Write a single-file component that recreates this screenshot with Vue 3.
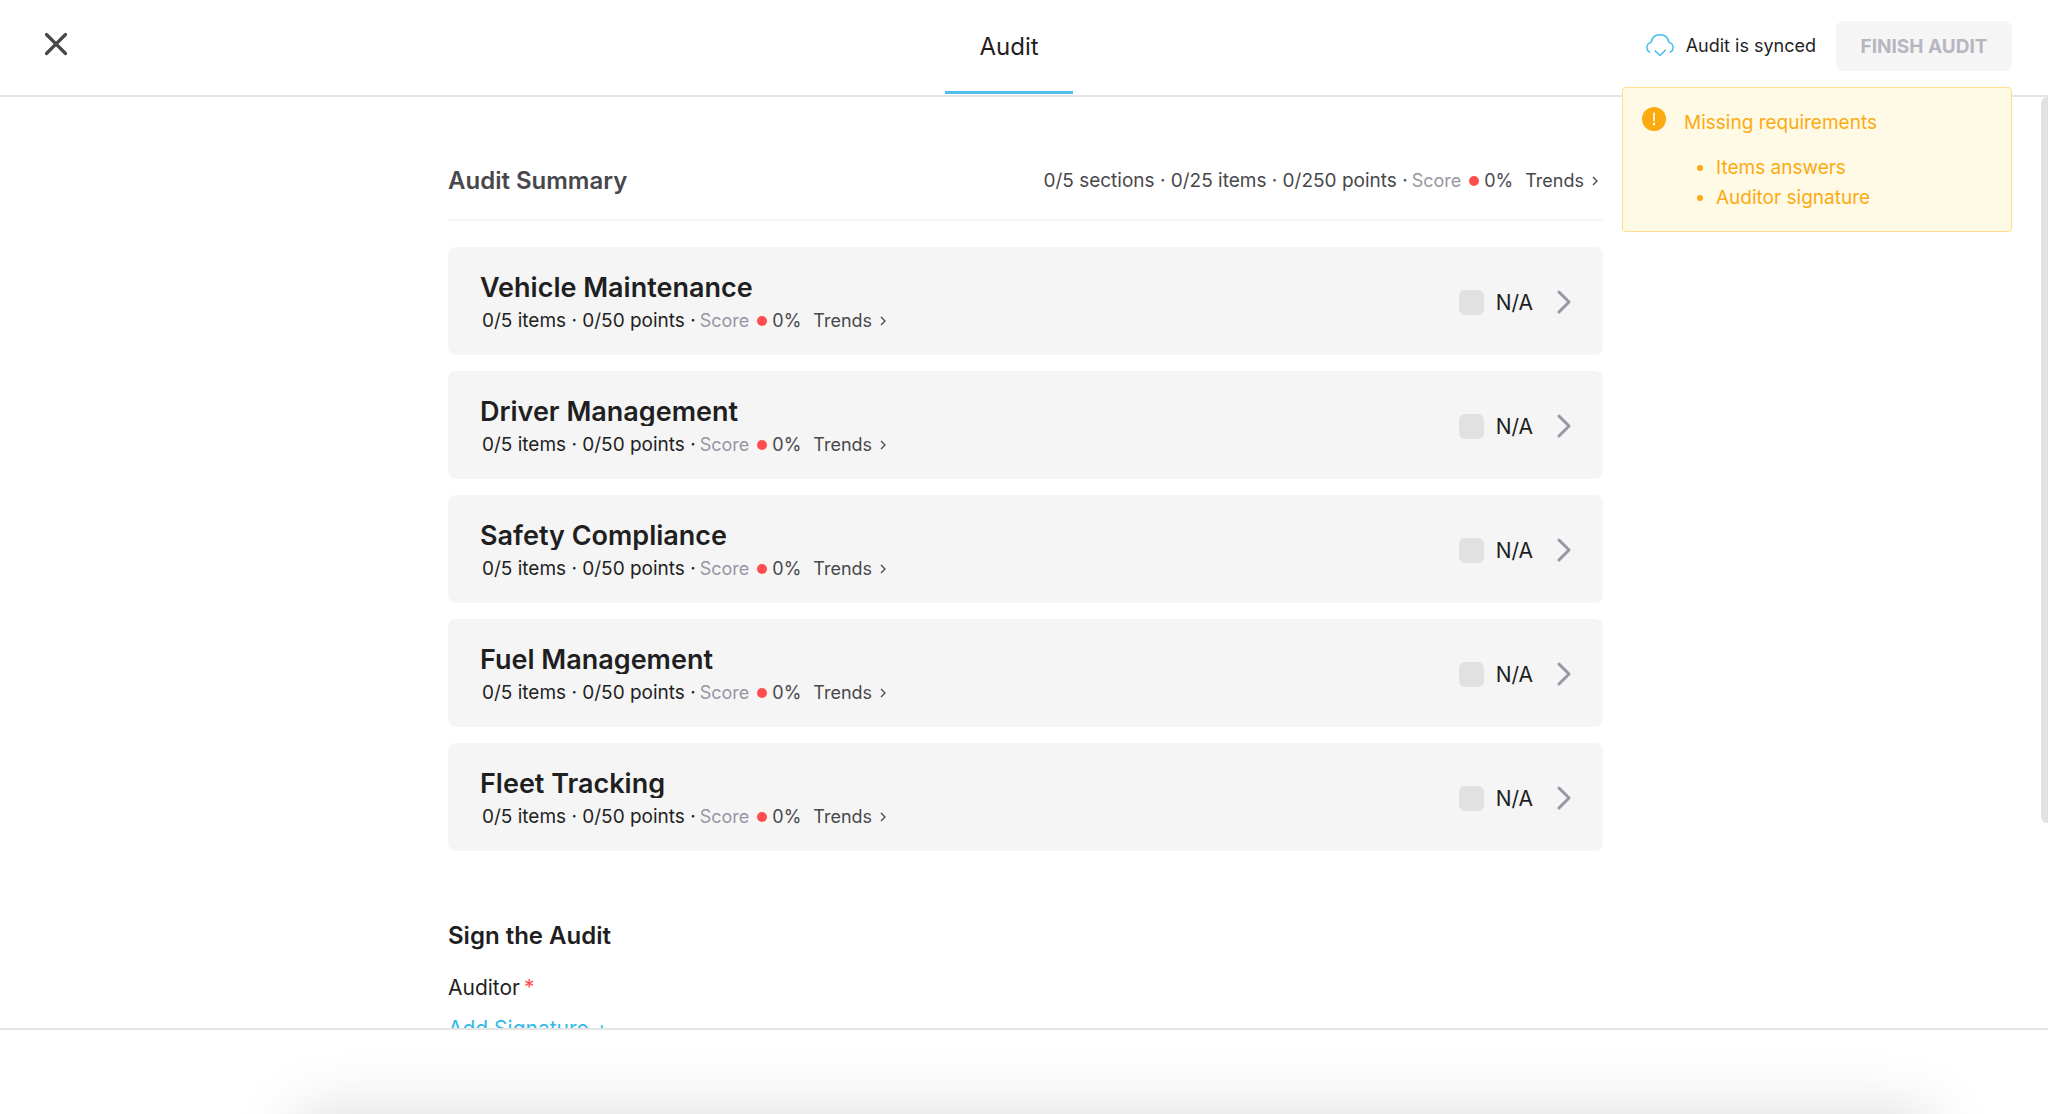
<script setup>
import { ref } from 'vue'

const summary = ['0/5 sections', '0/25 items', '0/250 points']

const sections = ref([
  'Vehicle Maintenance',
  'Driver Management',
  'Safety Compliance',
  'Fuel Management',
  'Fleet Tracking',
].map((name, index) => ({
  id: `section-${index}`,
  name,
  counts: ['0/5 items', '0/50 points'],
  notApplicable: false,
})))

const missing = ['Items answers', 'Auditor signature']
</script>

<template>
  <div class="page">
    <header class="header">
      <div class="header-start">
        <button class="close" type="button" aria-label="Close">
          <svg width="24" height="24" viewBox="0 0 24 24" fill="none" stroke="#48484c" stroke-width="3.2" stroke-linecap="round">
            <path d="M2.500 2.500l19 19M21.500 2.500l-19 19" />
          </svg>
        </button>
      </div>
      <nav class="tabs">
        <a class="tab" href="#audit" aria-current="page">Audit</a>
      </nav>
      <div class="header-end">
        <div class="sync">
          <svg width="28" height="24" viewBox="0 0 28 24" fill="none" stroke="#40bdec" stroke-width="1.5" stroke-linecap="round" stroke-linejoin="round">
            <path d="M3.600 19.200C1.800 18 .9 16.400.9 14.400c0-2.700 1.800-4.600 4.400-5.300C6 4.600 9.300 1.700 14 1.700s8 2.900 8.700 7.400c2.600.7 4.400 2.600 4.400 5.300 0 2-.9 3.600-2.700 4.800" />
            <path d="M9 17.800l5 4.700 5.500-5.500" />
          </svg>
          <span>Audit is synced</span>
        </div>
        <button class="finish" type="button" disabled>FINISH AUDIT</button>
        <aside class="notice">
          <svg class="notice-icon" width="24" height="24" viewBox="0 0 24 24">
            <circle cx="12" cy="12" r="12" fill="#fcaa12" />
            <path d="M12 6.500v7" stroke="#fffae6" stroke-width="1.800" stroke-linecap="round" />
            <circle cx="12" cy="17" r="1.300" fill="#fffae6" />
          </svg>
          <div>
            <p class="notice-title">Missing requirements</p>
            <ul class="notice-list">
              <li v-for="item in missing" :key="item">{{ item }}</li>
            </ul>
          </div>
        </aside>
      </div>
    </header>

    <main class="main">
      <div class="content">
        <div class="summary">
          <h2 class="summary-title">Audit Summary</h2>
          <div class="meta meta-summary">
            <span class="counts">{{ summary.join(' · ') }} ·</span>
            <span class="score">Score</span>
            <span class="dot"></span>
            <span>0%</span>
            <button class="trends" type="button">
              Trends
              <svg width="6" height="10" viewBox="0 0 6 10" fill="none" stroke="currentColor" stroke-width="1.300"><path d="M1 1l4 4-4 4" /></svg>
            </button>
          </div>
        </div>

        <section v-for="section in sections" :key="section.id" class="card">
          <div class="card-info">
            <h3 class="card-title">{{ section.name }}</h3>
            <div class="meta">
              <span class="counts">{{ section.counts.join(' · ') }} ·</span>
              <span class="score">Score</span>
              <span class="dot"></span>
              <span>0%</span>
              <button class="trends" type="button">
                Trends
                <svg width="6" height="10" viewBox="0 0 6 10" fill="none" stroke="currentColor" stroke-width="1.300"><path d="M1 1l4 4-4 4" /></svg>
              </button>
            </div>
          </div>
          <div class="card-actions">
            <input :id="section.id" v-model="section.notApplicable" class="box" type="checkbox">
            <label :for="section.id">N/A</label>
            <button class="open" type="button" :aria-label="`Open ${section.name}`">
              <svg width="14" height="24" viewBox="0 0 14 24" fill="none" stroke="#9796a3" stroke-width="3" stroke-linecap="round" stroke-linejoin="round"><path d="M2 2l10 10L2 22" /></svg>
            </button>
          </div>
        </section>

        <section class="sign">
          <h2 class="sign-title">Sign the Audit</h2>
          <p class="auditor">Auditor<span class="required">*</span></p>
          <button class="add" type="button">Add Signature +</button>
        </section>
      </div>
      <div class="scroll-thumb"></div>
    </main>

    <footer class="footer">
      <div class="sheet"></div>
    </footer>
  </div>
</template>

<style>
body {
  margin: 0;
  background: #fff;
}
</style>

<style scoped>
.page {
  display: flex;
  flex-direction: column;
  height: 100vh;
  overflow: hidden;
  font-family: Inter, "Liberation Sans", sans-serif;
  font-size: 18px;
  color: #1f1f1f;
}
.page * {
  box-sizing: border-box;
}
h2, h3, p, ul {
  margin: 0;
}
button {
  padding: 0;
  border: 0;
  background: none;
  font: inherit;
  color: inherit;
}
svg {
  display: block;
  flex: none;
}

.header {
  display: grid;
  grid-template-columns: 1fr auto 1fr;
  flex: none;
  height: 97px;
  padding: 0 36px 0 6px;
  border-bottom: 2px solid #e4e4e4;
}
.header-start {
  padding: 32px 38px;
}
.tab {
  display: flex;
  justify-content: center;
  width: 128px;
  height: 94px;
  padding-top: 33px;
  border-bottom: 3px solid #53bde9;
  font-size: 24px;
  line-height: 28px;
  color: #1f1f1f;
  text-decoration: none;
}
.header-end {
  position: relative;
  display: flex;
  align-items: flex-start;
  justify-content: flex-end;
  gap: 20px;
  padding-top: 21px;
}
.sync {
  display: flex;
  align-items: center;
  gap: 12px;
  height: 48px;
}
.finish {
  width: 176px;
  height: 50px;
  border-radius: 8px;
  background: #f5f5f5;
  font-size: 19px;
  font-weight: 700;
  color: #b7b6c0;
}
.notice {
  position: absolute;
  z-index: 2;
  top: 87px;
  right: 0;
  display: flex;
  gap: 18px;
  width: 390px;
  height: 145px;
  padding: 19px;
  border: 1px solid #fde089;
  border-radius: 4px;
  background: #fffae6;
  font-size: 19px;
  color: #fcaa12;
}
.notice-title {
  padding-top: 4px;
  line-height: 24px;
}
.notice-list {
  margin-top: 18px;
  padding-left: 32px;
  line-height: 30px;
}

.main {
  position: relative;
  flex: 1;
  min-height: 0;
  padding-left: 3px;
  overflow: hidden;
}
.content {
  max-width: 1155px;
  margin: 0 auto;
}
.summary {
  display: flex;
  align-items: center;
  justify-content: space-between;
  height: 124px;
  padding-top: 46px;
  margin-bottom: 26px;
  border-bottom: 2px solid #f5f5f5;
}
.summary-title {
  font-size: 24px;
  font-weight: 600;
  line-height: 32px;
  color: #48484c;
}
.meta {
  display: flex;
  align-items: baseline;
  padding-left: 2px;
  line-height: 24px;
  color: #48484c;
}
.counts {
  margin-right: 4px;
  font-size: 19px;
  color: #1f1f1f;
}
.meta-summary {
  padding-right: 5px;
}
.meta-summary .counts {
  color: #48484c;
}
.score {
  color: #9796a3;
}
.dot {
  align-self: center;
  width: 10px;
  height: 10px;
  margin: 0 5px 0 8px;
  border-radius: 50%;
  background: #ff4d4f;
}
.trends {
  display: flex;
  align-items: center;
  gap: 8px;
  margin-left: 12px;
}
.card {
  display: flex;
  align-items: center;
  justify-content: space-between;
  height: 108px;
  margin-bottom: 16px;
  padding: 0 32px;
  border-radius: 8px;
  background: #f5f5f5;
}
.card-title {
  overflow: hidden;
  font-size: 27px;
  font-weight: 600;
  line-height: 28px;
}
.card-info {
  padding-top: 5px;
}
.card-info .meta {
  margin-top: 7px;
}
.card-actions {
  display: flex;
  align-items: center;
  padding-top: 2px;
  font-size: 21px;
}
.box {
  appearance: none;
  width: 25px;
  height: 25px;
  margin: 0 12px 0 0;
  border-radius: 6px;
  background: #e1e1e1;
}
.open {
  margin-left: 24px;
}

.sign {
  padding-top: 53px;
}
.sign-title {
  font-size: 24px;
  font-weight: 600;
  line-height: 32px;
}
.auditor {
  margin-top: 23px;
  font-size: 21px;
  line-height: 26px;
}
.required {
  margin-left: 4px;
  color: #ff4d4f;
}
.add {
  display: block;
  margin-top: 15px;
  font-size: 21px;
  line-height: 26px;
  color: #33b9e8;
}
.scroll-thumb {
  position: absolute;
  top: 0;
  right: 0;
  width: 7px;
  height: 78%;
  border-radius: 6px 0 0 6px;
  background: #e1e1e1;
}

.footer {
  position: relative;
  flex: none;
  height: 86px;
  border-top: 2px solid #e4e4e4;
  overflow: hidden;
  background: #fff;
}
.sheet {
  position: absolute;
  top: 100%;
  right: 117px;
  left: 297px;
  height: 200px;
  box-shadow: 0 0 60px rgba(0, 0, 0, 0.15);
}
</style>
